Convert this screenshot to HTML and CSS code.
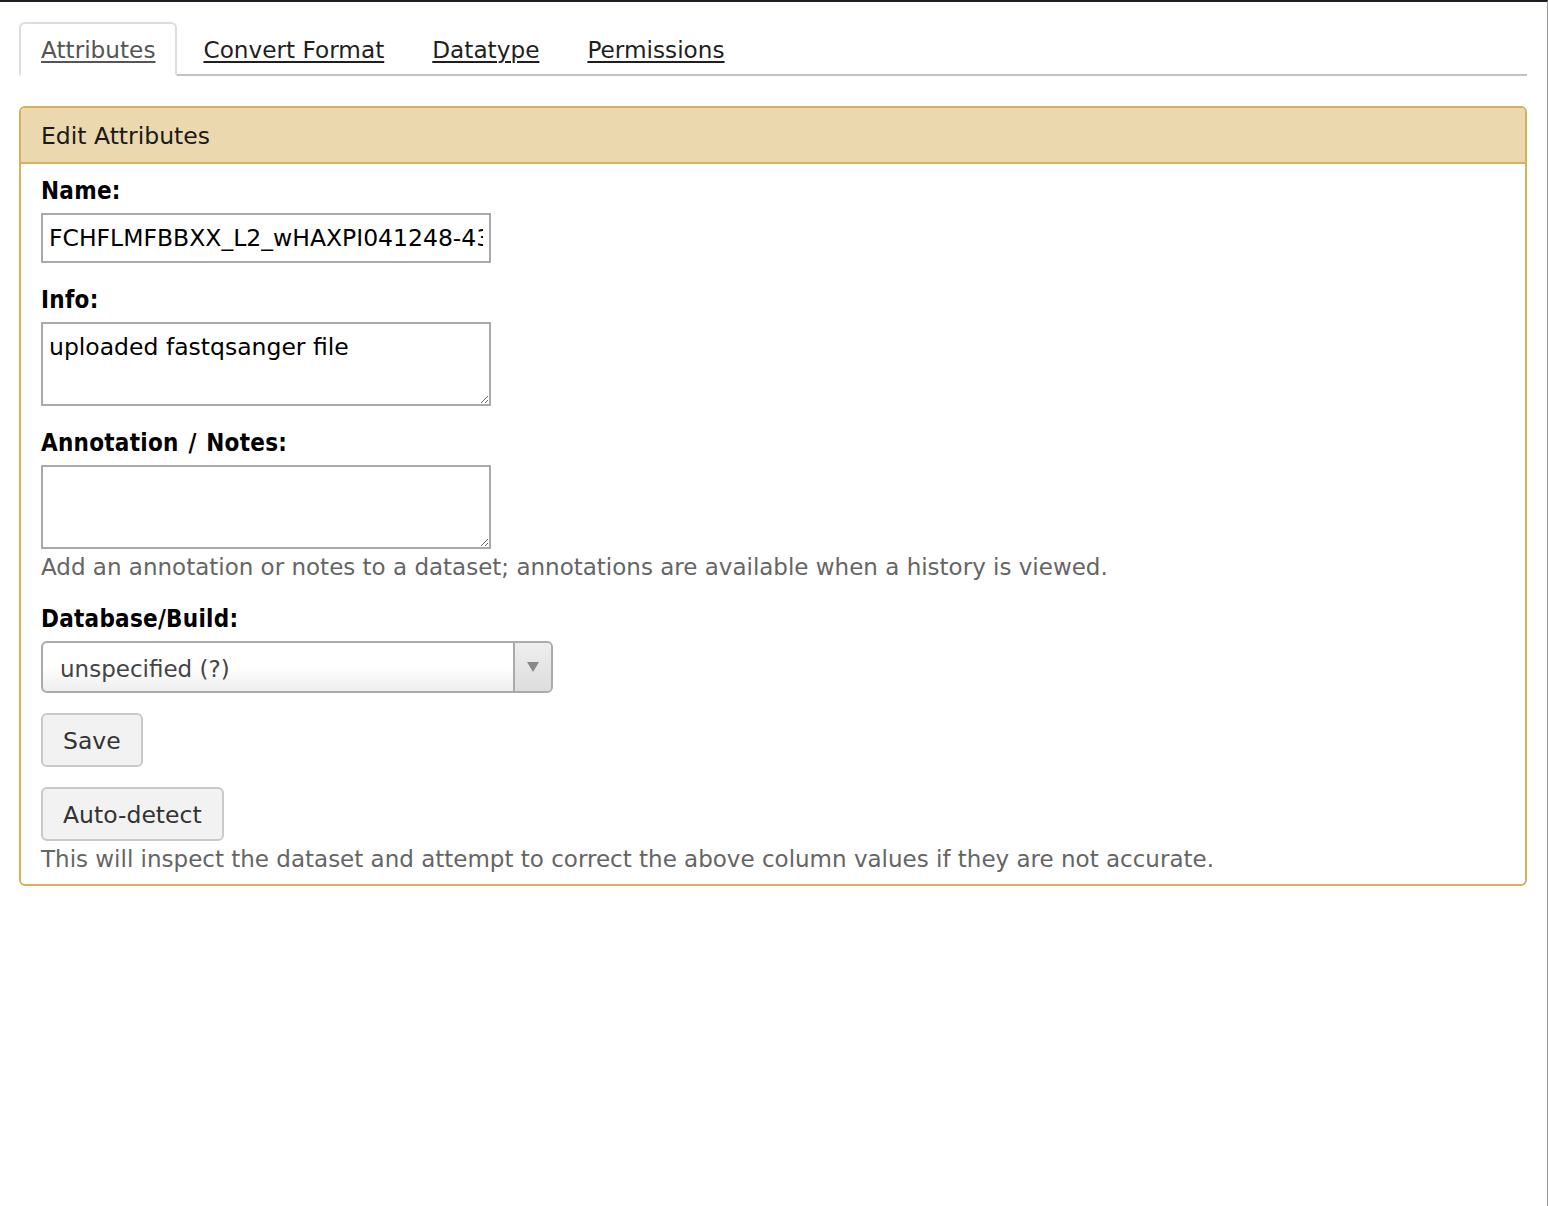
FILE: index.html
```html
<!DOCTYPE html>
<html lang="en">
<head>
<meta charset="utf-8">
<title>Edit Dataset Attributes</title>
<link rel="stylesheet" href="styles.css">
</head>
<body>
<div class="page">
  <ul class="tabs">
    <li class="tab active"><a href="#">Attributes</a></li>
    <li class="tab"><a href="#">Convert Format</a></li>
    <li class="tab"><a href="#">Datatype</a></li>
    <li class="tab"><a href="#">Permissions</a></li>
  </ul>

  <div class="panel">
    <div class="panel-header">Edit Attributes</div>
    <div class="panel-body">
      <div class="form-row">
        <label class="label">Name:</label>
        <input class="text-input" type="text" value="FCHFLMFBBXX_L2_wHAXPI041248-43_1.fq.gz">
      </div>
      <div class="form-row">
        <label class="label">Info:</label>
        <textarea class="text-area">uploaded fastqsanger file</textarea>
      </div>
      <div class="form-row">
        <label class="label">Annotation / Notes:</label>
        <textarea class="text-area"></textarea>
        <div class="help">Add an annotation or notes to a dataset; annotations are available when a history is viewed.</div>
      </div>
      <div class="form-row form-row-last">
        <label class="label">Database/Build:</label>
        <div class="select">
          <span class="select-value">unspecified (?)</span>
          <span class="select-arrow"><span class="triangle"></span></span>
        </div>
      </div>
      <div class="button-row">
        <button class="btn" type="button">Save</button>
      </div>
      <div class="button-row">
        <button class="btn" type="button">Auto-detect</button>
        <div class="help">This will inspect the dataset and attempt to correct the above column values if they are not accurate.</div>
      </div>
    </div>
  </div>
</div>
</body>
</html>
```

FILE: styles.css
```css
html, body {
  margin: 0;
  padding: 0;
  background: #fff;
}

body {
  font-family: "DejaVu Sans", sans-serif;
  font-size: 23.5px;
  color: #222;
}

.page {
  box-sizing: border-box;
  width: 1548px;
  min-height: 1206px;
  border-top: 2px solid #1b1e25;
  border-right: 1px solid #999;
  padding: 20px 20px 0 19px;
}

.tabs {
  list-style: none;
  margin: 0;
  padding: 0;
  display: flex;
  border-bottom: 2px solid #c2c2c2;
}

.tab {
  margin-right: 4px;
  margin-bottom: -2px;
}

.tab a {
  display: block;
  padding: 9px 20px 7px;
  line-height: 34px;
  font-size: 23.2px;
  border: 2px solid transparent;
  border-radius: 6px 6px 0 0;
  color: #1f1f1f;
  text-decoration: underline;
  text-decoration-thickness: 2px;
  text-underline-offset: 3px;
}

.tab.active a {
  border-color: #ddd;
  border-bottom-color: #fff;
  color: #555;
  background: #fff;
}

.panel {
  margin-top: 30px;
  border: 2px solid #d6b15c;
  border-radius: 6px;
}

.panel-header {
  background: #ebd8ae;
  border-bottom: 2px solid #d6b15c;
  border-radius: 4px 4px 0 0;
  padding: 0 20px;
  height: 54px;
  line-height: 56px;
  color: #1a1a1a;
}

.panel-body {
  padding: 12px 20px 10px;
}

.form-row {
  margin-bottom: 22px;
}

.form-row-last {
  margin-bottom: 0;
}

.label {
  display: block;
  font-family: "DejaVu Sans Condensed", "DejaVu Sans", sans-serif;
  font-size: 24px;
  font-weight: bold;
  letter-spacing: 0.25px;
  word-spacing: 2px;
  color: #000;
  line-height: 30px;
  margin-bottom: 7px;
}

.text-input {
  display: block;
  box-sizing: border-box;
  width: 450px;
  height: 50px;
  border: 2px solid #a9a9a9;
  padding: 0 6px;
  font-family: inherit;
  font-size: 23.5px;
  color: #000;
  background: #fff;
  outline: none;
}

.text-area {
  display: block;
  box-sizing: border-box;
  width: 450px;
  height: 84px;
  border: 2px solid #a9a9a9;
  padding: 8px 6px 6px;
  font-family: inherit;
  font-size: 23.5px;
  line-height: 30px;
  color: #000;
  background: #fff;
  margin: 0;
}

.help {
  color: #656565;
  font-size: 23px;
  line-height: 30px;
  margin-top: 3px;
}

.select {
  box-sizing: border-box;
  width: 512px;
  height: 52px;
  border: 2px solid #aaa;
  border-radius: 6px;
  background: linear-gradient(to bottom, #ffffff 0%, #ffffff 50%, #eeeeee 100%);
  display: flex;
  align-items: stretch;
  overflow: hidden;
}

.select-value {
  flex: 1;
  padding-left: 17px;
  line-height: 52px;
  color: #444;
  font-size: 23px;
}

.select-arrow {
  width: 36px;
  border-left: 2px solid #aaa;
  background: linear-gradient(to bottom, #eeeeee 0%, #dddddd 100%);
  display: flex;
  align-items: center;
  justify-content: center;
}

.triangle {
  width: 0;
  height: 0;
  border-left: 6px solid transparent;
  border-right: 6px solid transparent;
  border-top: 10px solid #888;
}

.button-row {
  margin-top: 20px;
}

.btn {
  display: block;
  box-sizing: border-box;
  height: 54px;
  padding: 2px 20px 0;
  border: 2px solid #c9c9c9;
  border-radius: 6px;
  background: #f2f2f2;
  font-family: inherit;
  font-size: 23.5px;
  color: #333;
  cursor: pointer;
}
```
